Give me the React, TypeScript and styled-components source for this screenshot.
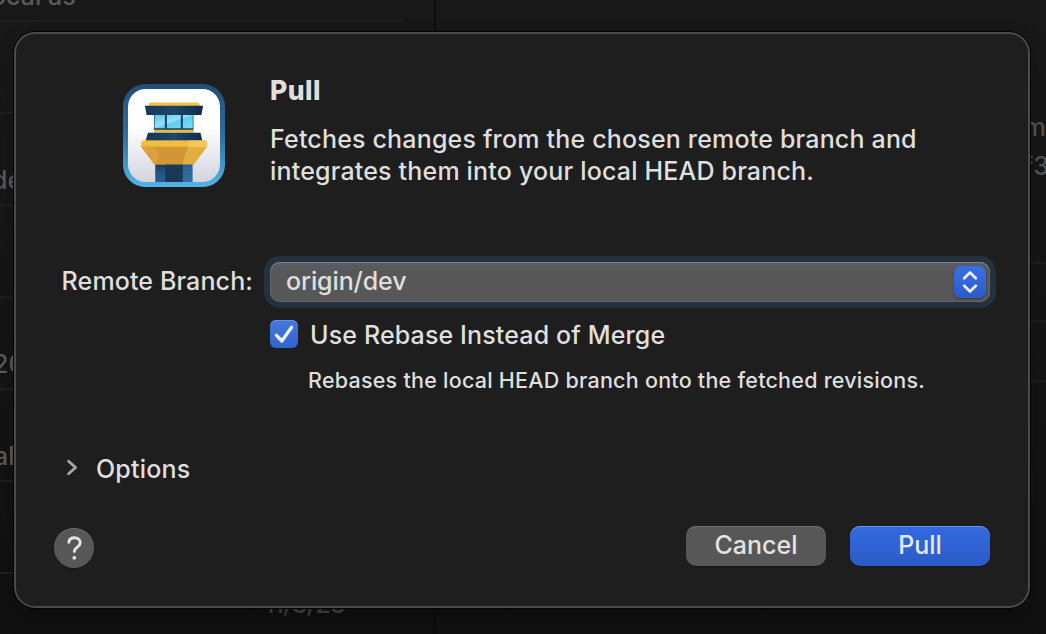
import React from "react";
import styled, { createGlobalStyle } from "styled-components";

const GlobalStyle = createGlobalStyle`
  html, body, #root { margin: 0; height: 100%; }
  body {
    overflow: hidden;
    background: #171717;
    color: #dfdfdf;
    font-family: Inter, "Liberation Sans", sans-serif;
    font-size: 25px;
    font-weight: 450;
    line-height: 32px;
  }
  * { box-sizing: border-box; }
`;

const Screen = styled.div`
  position: relative;
  width: 1046px;
  height: 634px;
  display: flex;
  overflow: hidden;
  background: linear-gradient(#181818, #151515 50%, #101010 97%);
`;

const Sidebar = styled.div`
  width: 436px;
  height: 100%;
  flex: none;
  border-right: 2px solid #0d0d0d;
  overflow: hidden;
`;

const CommitRow = styled.div<{ $first?: boolean; $right?: boolean }>`
  height: ${(p) => (p.$first ? 22 : 92)}px;
  width: 403px;
  border-bottom: 2px solid #1f1f1f;
  display: flex;
  align-items: flex-end;
  justify-content: ${(p) => (p.$right ? "flex-end" : "flex-start")};
  padding: 0 58px ${(p) => (p.$right ? 44 : 8)}px 0;
  color: ${(p) => (p.$right ? "#404040" : "#5a5a5a")};
  letter-spacing: ${(p) => (p.$right ? "-0.7px" : "normal")};
  white-space: pre;
`;

const Clip = styled.span<{ $shift: number }>`
  margin-left: ${(p) => p.$shift}px;
`;

const Details = styled.div`
  flex: 1;
  display: flex;
  flex-direction: column;
  padding-top: 111px;
  color: #525252;
`;

const Hash = styled.div<{ $h: number; $right?: number }>`
  height: ${(p) => p.$h}px;
  text-align: right;
  margin-right: ${(p) => p.$right ?? 0}px;
`;

const Line = styled.div<{ $gap: number }>`
  height: 2px;
  flex: none;
  margin-bottom: ${(p) => p.$gap}px;
  background: #1e1e1e;
`;

const Dialog = styled.div`
  position: absolute;
  left: 14px;
  top: 32px;
  width: 1016px;
  height: 576px;
  padding: 40px 38px 38px;
  border: 2px solid #4a4a4a;
  border-radius: 21px;
  background: #1e1e1e;
  box-shadow: 0 0 0 1px #020202, 0 12px 24px rgba(0, 0, 0, 0.2);
  display: flex;
  flex-direction: column;
`;

const Header = styled.div`
  display: flex;
  height: 113px;
  padding-left: 69px;
  gap: 45px;
`;

const AppIcon = styled.svg`
  width: 102px;
  height: 103px;
  margin-top: 10px;
  flex: none;
`;

const Title = styled.h1`
  margin: 0 0 17px;
  font-size: 26.5px;
  line-height: 32px;
  font-weight: 800;
  letter-spacing: 0.5px;
`;

const Body = styled.p`
  margin: 0;
  white-space: pre;
  letter-spacing: 0.18px;
`;

const Field = styled.div`
  margin-top: 75px;
  display: flex;
  height: 40px;
`;

const Label = styled.label`
  width: 199px;
  margin-right: 17px;
  padding-top: 3px;
  text-align: right;
  white-space: nowrap;
  letter-spacing: 0.12px;
`;

const Select = styled.div`
  width: 720px;
  height: 40px;
  padding: 3px 4px 4px 16px;
  display: flex;
  justify-content: space-between;
  border-radius: 10px;
  letter-spacing: -0.1px;
  background: linear-gradient(#58606a, #575757 22%, #575757);
  box-shadow: 0 0 0 6px #25313d, inset 0 1px 0 #76828f, inset 0 0 0 1px #62676d;
`;

const Stepper = styled.span`
  width: 32px;
  height: 32px;
  margin-top: 1px;
  border-radius: 7px;
  background: linear-gradient(#3b70e2, #2b5bc9);
  box-shadow: 0 1px 2px rgba(0, 0, 0, 0.35);
  svg { display: block; }
`;

const CheckRow = styled.div`
  display: flex;
  align-items: center;
  margin: 17px 0 0 216px;
  height: 32px;
  gap: 12px;
  letter-spacing: 0.14px;
`;

const Checkbox = styled.span`
  width: 28px;
  height: 28px;
  margin-top: -2px;
  border-radius: 6px;
  background: linear-gradient(#4377df, #3164cb);
  box-shadow: inset 0 1px 0 #6690e4;
  svg { display: block; }
`;

const Hint = styled.div`
  margin: 13px 0 1px 254px;
  font-size: 21.5px;
  letter-spacing: 0.24px;
  height: 32px;
  white-space: nowrap;
`;

const Disclosure = styled.div`
  display: flex;
  align-items: center;
  margin: 56px 0 0 10px;
  height: 32px;
  gap: 14px;
  letter-spacing: 0.2px;
`;

const Footer = styled.div`
  margin-top: auto;
  height: 42px;
  display: flex;
  align-items: flex-start;
`;

const Help = styled.button`
  width: 40px;
  height: 40px;
  margin: 2px auto 0 0;
  padding: 0;
  border: 0;
  border-radius: 50%;
  background: #575757;
  box-shadow: inset 0 1px 0 #686868, 0 1px 1px rgba(0, 0, 0, 0.3);
  svg { display: block; }
`;

const Button = styled.button<{ $primary?: boolean }>`
  width: 140px;
  height: 40px;
  margin-left: 24px;
  padding: 0 0 2px;
  border: 0;
  border-radius: 10px;
  font: inherit;
  color: ${(p) => (p.$primary ? "#e1e9fa" : "#e3e3e3")};
  background: ${(p) => (p.$primary ? "linear-gradient(#3369e0, #2c5bc6)" : "#575757")};
  box-shadow: inset 0 1px 0 ${(p) => (p.$primary ? "#6c93e6" : "#707070")}, 0 1px 1px rgba(0, 0, 0, 0.35);
`;

const TowerIcon = () => (
  <AppIcon viewBox="39 28 307 308" preserveAspectRatio="none">
    <defs>
      <linearGradient id="frame" x1="0" y1="0" x2="0" y2="1">
        <stop offset="0" stopColor="#234d75" />
        <stop offset="0.5" stopColor="#2e6f9f" />
        <stop offset="1" stopColor="#55b4e5" />
      </linearGradient>
      <linearGradient id="paper" x1="0" y1="0" x2="0" y2="1">
        <stop offset="0.4" stopColor="#fff" />
        <stop offset="1" stopColor="#d3d5de" />
      </linearGradient>
      <linearGradient id="glass" x1="0" y1="0" x2="1" y2="1">
        <stop offset="0" stopColor="#55c2e9" />
        <stop offset="0.45" stopColor="#94e2f8" />
        <stop offset="0.55" stopColor="#62cdef" />
        <stop offset="1" stopColor="#7edaf5" />
      </linearGradient>
      <linearGradient id="navy" x1="0" y1="0" x2="1" y2="0">
        <stop offset="0" stopColor="#153858" />
        <stop offset="0.5" stopColor="#1d466b" />
        <stop offset="1" stopColor="#112c49" />
      </linearGradient>
      <linearGradient id="shaft" x1="0" y1="0" x2="0" y2="1">
        <stop offset="0" stopColor="#173553" />
        <stop offset="0.5" stopColor="#245585" />
        <stop offset="1" stopColor="#2a5d8e" />
      </linearGradient>
    </defs>
    <rect x="39" y="28" width="307" height="308" rx="67" fill="url(#frame)" />
    <rect x="54" y="43" width="277" height="278" rx="53" fill="url(#paper)" />
    <path d="M136 264H248V321H136Z" fill="url(#shaft)" />
    <path d="M166 266H219V321H166Z" fill="#193956" />
    <path d="M219 268H248V321H219Z" fill="#347bb5" opacity="0.55" />
    <path d="M119 83H266L271 94H114Z" fill="#f0c144" />
    <path d="M132 118H251V166H132Z" fill="#193d60" />
    <path d="M134 120H165V160H134ZM171 120H213V160H171ZM219 120H249V160H219Z" fill="url(#glass)" />
    <path d="M105 93H280L275 121H110Z" fill="url(#navy)" />
    <path d="M132 165H252V174H132Z" fill="#eebb3d" />
    <path d="M114 174H272L278 198H107Z" fill="url(#navy)" />
    <path d="M98 197H288L292 202V217H94V202Z" fill="#f0be38" />
    <path d="M94 216H146L166 269H134Z" fill="#c78a2c" />
    <path d="M134 216H236L219 269H137Z" fill="#d39636" />
    <path d="M94 216H134L148 237L137 269H133Z" fill="#dba23c" />
    <path d="M236 216H292L252 269H219Z" fill="#e2ae40" />
    <path d="M236 197H288L292 202V217H236Z" fill="#f1c85a" />
  </AppIcon>
);

export default function App() {
  return (
    <>
      <GlobalStyle />
      <Screen>
        <Sidebar>
          <CommitRow $first><Clip $shift={-9}>ocal as</Clip></CommitRow>
          <CommitRow />
          <CommitRow><Clip $shift={-8}>de</Clip></CommitRow>
          <CommitRow />
          <CommitRow><Clip $shift={-7}>20</Clip></CommitRow>
          <CommitRow><Clip $shift={-6}>al</Clip></CommitRow>
          <CommitRow />
          <CommitRow $right>11/3/23</CommitRow>
        </Sidebar>
        <Details>
          <Hash $h={39}>m</Hash>
          <Hash $h={112} $right={-3}>f3</Hash>
          <Line $gap={56} />
          <Line $gap={58} />
          <Line $gap={0} />
        </Details>
        <Dialog>
          <Header>
            <TowerIcon />
            <div>
              <Title>Pull</Title>
              <Body>{"Fetches changes from the chosen remote branch and\nintegrates them into your local HEAD branch."}</Body>
            </div>
          </Header>
          <Field>
            <Label>Remote Branch:</Label>
            <Select>
              <span>origin/dev</span>
              <Stepper>
                <svg width="32" height="32" fill="none" stroke="#e6eefc" strokeWidth="2.8" strokeLinecap="round" strokeLinejoin="round">
                  <path d="M10.2 12.2L16 6.6L21.8 12.2M10.2 19.8L16 25.4L21.8 19.8" />
                </svg>
              </Stepper>
            </Select>
          </Field>
          <CheckRow>
            <Checkbox>
              <svg width="28" height="28" fill="none" stroke="#e8effc" strokeWidth="3.4" strokeLinecap="round" strokeLinejoin="round">
                <path d="M6.3 15.2L11.8 21L21.6 7.2" />
              </svg>
            </Checkbox>
            <span>Use Rebase Instead of Merge</span>
          </CheckRow>
          <Hint>Rebases the local HEAD branch onto the fetched revisions.</Hint>
          <Disclosure>
            <svg width="18" height="20" fill="none" stroke="#a8a8a8" strokeWidth="2.8" strokeLinecap="round" strokeLinejoin="round">
              <path d="M4.6 2.2L11.6 8.5L4.6 14.8" />
            </svg>
            <span>Options</span>
          </Disclosure>
          <Footer>
            <Help aria-label="Help">
              <svg width="40" height="40" fill="none" stroke="#e4e4e4" strokeWidth="2.9" strokeLinecap="round">
                <path d="M14.8 14.2C15.2 11.3 17.3 9.7 20.4 9.7C23.7 9.7 26.2 11.6 26.2 14.7C26.2 19 20.3 19.2 20.3 23.6" />
                <circle cx="20.3" cy="29.8" r="1.9" fill="#e4e4e4" stroke="none" />
              </svg>
            </Help>
            <Button>Cancel</Button>
            <Button $primary>Pull</Button>
          </Footer>
        </Dialog>
      </Screen>
    </>
  );
}
